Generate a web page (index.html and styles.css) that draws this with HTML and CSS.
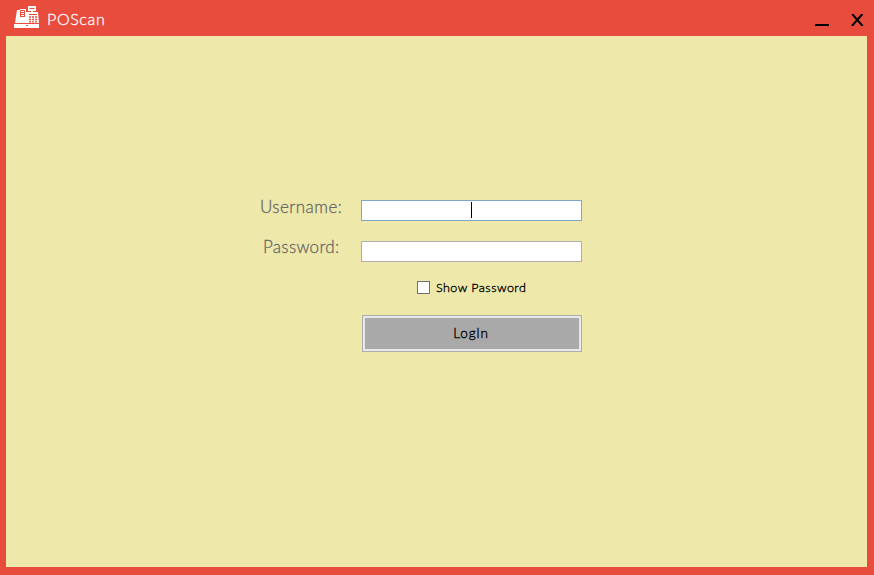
FILE: index.html
```html
<!DOCTYPE html>
<html lang="en">
<head>
<meta charset="utf-8">
<title>POScan</title>
<link rel="stylesheet" href="styles.css">
</head>
<body>
<div class="window">
  <header class="titlebar">
    <svg class="logo" width="26" height="22" viewBox="0 0 26 22">
      <path fill="#fff" d="M14 0h8v5h-3v1h5l1 11H1L3 4h3V3h6v3h5V5h-3z"/>
      <path fill="#fff" d="M0 18h25v4H0z"/>
      <g fill="none" stroke="#e84c3d">
        <path d="M15.5 2.5h5"/>
        <path d="M6.5 11V4.5h4V11M7 6.5h3M7 8.5h3M7 10.5h3"/>
        <path d="M15 8.5h8"/>
        <path d="M15 11h2M18 11h2M21 11h2M15 13.5h2M18 13.5h2M21 13.5h2M15 15.8h2M18 15.8h2M21 15.8h2" stroke-width="1.3"/>
        <path d="M12 19.5h2"/>
      </g>
    </svg>
    <h1 class="title">POScan</h1>
    <button class="control minimize" aria-label="Minimize"><svg width="14" height="2"><path d="M0 0h14v2H0z"/></svg></button>
    <button class="control close" aria-label="Close"><svg width="13" height="12" viewBox="0 0 13 12"><path d="M1.2 0L11.6 12M11.4 0L.9 12" stroke="#000" stroke-width="2"/></svg></button>
  </header>
  <main class="panel">
    <form class="login">
      <label class="label user-label" for="user">Username:</label>
      <div class="field user-field focused" id="user"><span class="caret"></span></div>
      <label class="label pass-label" for="pass">Password:</label>
      <div class="field pass-field" id="pass"></div>
      <label class="show"><span class="box"></span><span class="show-text">Show Password</span></label>
      <button class="submit" type="button"><span class="submit-text">LogIn</span></button>
    </form>
  </main>
</div>
</body>
</html>
```
FILE: styles.css
```css
* { box-sizing: border-box; }
body { margin: 0; font-family: Lato, sans-serif; }
.window {
  width: 874px; height: 575px;
  display: flex; flex-direction: column;
  padding: 0 7px 8px 6px;
  background: #e84c3d;
}
.titlebar { height: 36px; flex: none; display: flex; align-items: flex-start; padding: 0 3px 0 8px; }
.logo { margin-top: 6px; }
.title { margin: 9px auto 0 7px; font-size: 16px; line-height: 20px; font-weight: 300; letter-spacing: .65px; color: #fff; -webkit-text-stroke: .3px #fff; }
.control { border: 0; padding: 0; background: none; display: block; }
.control svg { display: block; }
.minimize { margin: 24px 22px 0 0; }
.close { margin-top: 14px; }
.panel { flex: 1; background: #eee8aa; display: flex; padding: 164px 0 0 254px; align-items: flex-start; }
.login { display: grid; grid-template-columns: 101px 221px; grid-template-rows: 21px 20px 21px 53px 37px; }
.label { grid-column: 1; font-size: 17px; font-weight: 300; line-height: 20px; letter-spacing: .45px; color: #696969; -webkit-text-stroke: .3px #696969; margin-top: -3px; white-space: nowrap; }
.user-label { grid-row: 1; }
.pass-label { grid-row: 3; margin-top: -4px; padding-left: 3px; letter-spacing: .3px; }
.field { grid-column: 2; background: #fff; border: 1px solid #adadad; display: flex; justify-content: center; align-items: flex-start; }
.user-field { grid-row: 1; }
.pass-field { grid-row: 3; }
.focused { border-color: #7fa5cd; }
.caret { width: 1px; height: 16px; margin-top: 1px; background: #000; }
.show { grid-column: 2; grid-row: 4; display: flex; height: 13px; margin: 19px 0 0 56px; align-items: center; }
.box { width: 13px; height: 13px; border: 1px solid #707070; background: #fff; }
.show-text { margin-left: 6px; font-size: 12.5px; font-weight: 300; line-height: 14px; letter-spacing: .47px; white-space: nowrap; -webkit-text-stroke: .35px #000; }
.submit {
  grid-column: 2; grid-row: 5; margin: 0 0 0 1px; height: 37px; padding: 0 0 2px;
  border: 1px solid #adadad; box-shadow: inset 0 0 0 2px #e8e8e8;
  background: #a9a9a9; font: 300 13.5px/20px Lato, sans-serif; letter-spacing: .8px; color: #000; -webkit-text-stroke: .35px #000;
}
.submit-text { margin-right: 2px; }
```
